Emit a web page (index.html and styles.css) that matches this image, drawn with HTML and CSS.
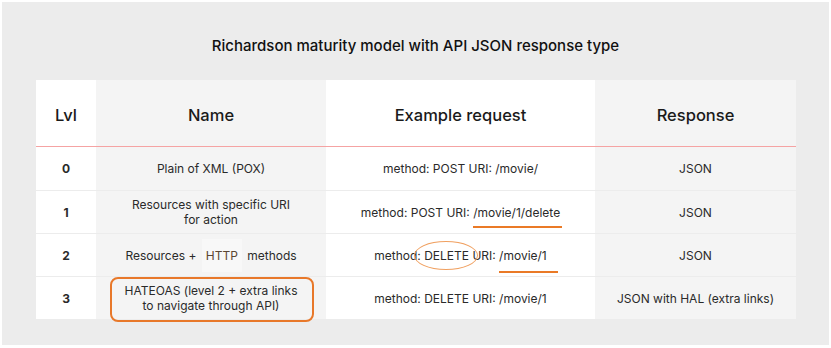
FILE: index.html
```html
<!DOCTYPE html>
<html lang="en">
<head>
    <meta charset="UTF-8">
    <title>Richardson maturity model</title>
    <link rel="stylesheet" href="styles.css">
</head>
<body>
    <div class="frame">
        <h1 class="title">Richardson maturity model with API JSON response type</h1>

        <table class="rmm">
            <thead>
                <tr>
                    <th class="col-lvl">Lvl</th>
                    <th class="col-name">Name</th>
                    <th class="col-req">Example request</th>
                    <th class="col-resp">Response</th>
                </tr>
            </thead>
            <tbody>
                <tr>
                    <td class="col-lvl">0</td>
                    <td class="col-name">Plain of XML (POX)</td>
                    <td class="col-req">method: POST URI: /movie/</td>
                    <td class="col-resp">JSON</td>
                </tr>
                <tr>
                    <td class="col-lvl">1</td>
                    <td class="col-name">Resources with specific URI<br>for action</td>
                    <td class="col-req">method: POST URI: <span class="mark-under">/movie/1/delete</span></td>
                    <td class="col-resp">JSON</td>
                </tr>
                <tr>
                    <td class="col-lvl">2</td>
                    <td class="col-name">Resources + <span class="http">HTTP</span> methods</td>
                    <td class="col-req">method: <span class="mark-circle">DELETE</span> URI: <span class="mark-under long">/movie/1</span></td>
                    <td class="col-resp">JSON</td>
                </tr>
                <tr>
                    <td class="col-lvl">3</td>
                    <td class="col-name"><span class="mark-box">HATEOAS (level 2 + extra links<br>to navigate through API)</span></td>
                    <td class="col-req">method: DELETE URI: /movie/1</td>
                    <td class="col-resp">JSON with HAL (extra links)</td>
                </tr>
            </tbody>
        </table>
    </div>
</body>
</html>
```

FILE: styles.css
```css
body {
    margin: 0;
    background: #ffffff;
    font-family: Inter, "Liberation Sans", sans-serif;
    color: #1a1a1a;
}

.frame {
    margin: 2px;
    width: 827px;
    height: 343px;
    background: #ececec;
    overflow: hidden;
}

.title {
    margin: 0;
    padding-top: 34px;
    height: 44px;
    font-size: 15px;
    font-weight: 500;
    text-align: center;
    color: #111;
}

/* Table */
.rmm {
    margin-left: 34px;
    width: 760px;
    border-collapse: collapse;
    table-layout: fixed;
}

.rmm th,
.rmm td {
    padding: 0 4px;
    text-align: center;
    vertical-align: middle;
}

.rmm th {
    height: 62px;
    padding-top: 4px;
    font-size: 16.5px;
    font-weight: 500;
    border-bottom: 1px solid #f5a3a3;
}

.rmm td {
    height: 42px;
    font-size: 12px;
    line-height: 15px;
    color: #2a2a2a;
    border-top: 1px solid #ececec;
}

.rmm tbody tr:first-child td {
    border-top: none;
    height: 43px;
}

.rmm tbody td.col-lvl {
    font-weight: 700;
    font-size: 12px;
}

.col-lvl { width: 52px; background: #ffffff; }
.col-name { width: 222px; background: #f4f4f4; }
.col-req { width: 261px; background: #ffffff; }
.col-resp { background: #f4f4f4; }

.http {
    display: inline-block;
    padding: 9px 4px;
    margin: 0 2px;
    background: #f8f8f8;
    color: #5b4632;
}

/* Orange annotations */
.mark-under,
.mark-circle,
.mark-box {
    position: relative;
}

.mark-under::after {
    content: "";
    position: absolute;
    left: 0;
    right: -2px;
    bottom: -8px;
    height: 2px;
    background: #ea7a26;
}

.mark-under.long::after {
    right: -11px;
    bottom: -10px;
}

.mark-circle::before {
    content: "";
    position: absolute;
    left: -10px;
    right: -9px;
    top: -7px;
    bottom: -7px;
    border: 1px solid #f0a060;
    border-radius: 50%;
}

.mark-box {
    display: inline-block;
}

.mark-box::after {
    content: "";
    position: absolute;
    left: -15px;
    right: -16px;
    top: -6px;
    bottom: -9px;
    border: 2px solid #e8782a;
    border-radius: 8px;
}
```
